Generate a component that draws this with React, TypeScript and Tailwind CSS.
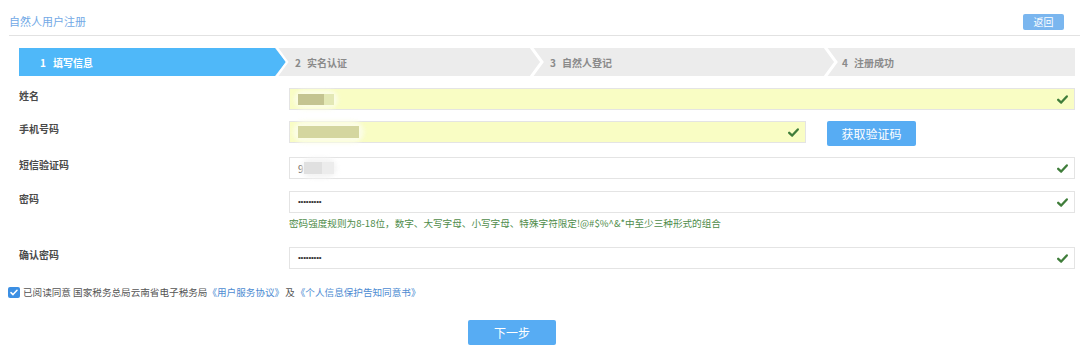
import React from "react";

const Check = () => (
  <svg width="11" height="9" viewBox="0 0 11 9" className="shrink-0">
    <path d="M1.2 4.8 L4.2 7.6 L9.8 1.4" fill="none" stroke="#3f7d3a" strokeWidth="2.3" strokeLinecap="round" strokeLinejoin="round" />
  </svg>
);

const Chevron = () => (
  <svg width="15" height="28" viewBox="0 0 15 28" className="shrink-0 bg-[#ececec]">
    <polyline points="1,-1 12,14 1,29" fill="none" stroke="#ffffff" strokeWidth="3" />
  </svg>
);

const BlueTip = () => (
  <svg width="15" height="28" viewBox="0 0 15 28" className="shrink-0 bg-[#ececec]">
    <polygon points="0,0 11,14 0,28" fill="#4fb8f9" />
    <polyline points="1,-1.5 12.2,14 1,29.5" fill="none" stroke="#ffffff" strokeWidth="2.2" />
  </svg>
);

const Label = ({ children }: { children: React.ReactNode }) => (
  <div className="w-[270px] shrink-0 pt-[1px] text-[10px] leading-[14px] font-semibold text-[#4a4a4a]">{children}</div>
);

const Input = ({ yellow, children, className }: { yellow?: boolean; children?: React.ReactNode; className?: string }) => (
  <div
    className={`h-[22px] border border-[#e4e4e4] flex items-center justify-between pl-[8px] pr-[6px] ${yellow ? "bg-[#f9fdc4]" : "bg-white"} ${className ?? "flex-1"}`}
  >
    <div className="flex items-center">{children}</div>
    <Check />
  </div>
);

const Dots = () => (
  <span className="font-['Liberation_Sans'] text-[8px] leading-none text-[#333] tracking-[-0.2px]">•••••••••</span>
);

export default function App() {
  return (
    <div className="w-[1080px] h-[350px] bg-white overflow-hidden font-['Noto_Sans_CJK_SC','Noto_Sans',sans-serif]">
      <div className="ml-[9px] h-[36px] flex items-center justify-between border-b border-[#e2e2e2] pr-[16px]">
        <div className="text-[11px] text-[#72a9e6] pt-[7px]">自然人用户注册</div>
        <div className="w-[41px] h-[16px] bg-[#7ab6ef] rounded-[2px] text-white text-[10px] flex items-center justify-center mt-[8px]">返回</div>
      </div>

      <div className="ml-[19px] mt-[12px] w-[1056px] h-[28px] flex bg-[#ececec] text-[10px] font-semibold">
        <div className="w-[256px] bg-[#4fb8f9] text-white flex items-center pl-[21px]">
          <span>1</span>
          <span className="ml-[7px]">填写信息</span>
        </div>
        <BlueTip />
        <div className="w-[240px] flex items-center pl-[5px] text-[#8a8a8a]">
          <span>2</span>
          <span className="ml-[6px]">实名认证</span>
        </div>
        <Chevron />
        <div className="w-[279px] flex items-center pl-[5px] text-[#8a8a8a]">
          <span>3</span>
          <span className="ml-[6px]">自然人登记</span>
        </div>
        <Chevron />
        <div className="flex-1 flex items-center pl-[3px] text-[#8a8a8a]">
          <span>4</span>
          <span className="ml-[6px]">注册成功</span>
        </div>
      </div>

      <div className="pl-[19px] w-[1075px] mt-[12px]">
        <div className="flex items-start">
          <Label>姓名</Label>
          <Input yellow>
            <div className="relative w-[36px] h-[11px]">
              <div className="absolute -inset-[4px] rounded-full bg-[#fbfde6] blur-[2px]" />
              <div className="absolute inset-0 flex">
                <div className="w-[26px] h-full bg-[#c4c491]" />
                <div className="w-[10px] h-full bg-[#e3e8b5]" />
              </div>
            </div>
          </Input>
        </div>

        <div className="flex items-start mt-[11px]">
          <Label>手机号码</Label>
          <Input yellow className="w-[517px]">
            <div className="relative w-[61px] h-[12px]">
              <div className="absolute -inset-[5px] rounded-full bg-[#fbfde6] blur-[2px]" />
              <div className="absolute inset-0 bg-[#d4d69f]" />
            </div>
          </Input>
          <div className="ml-[21px] w-[89px] h-[25px] bg-[#57acf3] rounded-[2px] text-white text-[12px] flex items-center justify-center">获取验证码</div>
        </div>

        <div className="flex items-start mt-[11px]">
          <Label>短信验证码</Label>
          <Input>
            <span className="text-[10px] text-[#555]">9</span>
            <div className="relative w-[30px] h-[12px]">
              <div className="absolute -inset-y-[4px] -inset-x-[3px] rounded-full bg-[#f4f4f4] blur-[2px]" />
              <div className="absolute inset-0 flex">
                <div className="w-[18px] h-full bg-[#e0e0e0]" />
                <div className="w-[12px] h-full bg-[#ececec]" />
              </div>
            </div>
          </Input>
        </div>

        <div className="flex items-start mt-[12px]">
          <Label>密码</Label>
          <div className="flex-1">
            <Input className="w-full">
              <Dots />
            </Input>
            <div className="mt-[4px] text-[9.6px] leading-[12px] text-[#4e8c4a] whitespace-nowrap">
              密码强度规则为8-18位，数字、大写字母、小写字母、特殊字符限定!@#$%^&amp;*中至少三种形式的组合
            </div>
          </div>
        </div>

        <div className="flex items-start mt-[18px]">
          <Label>确认密码</Label>
          <Input>
            <Dots />
          </Input>
        </div>
      </div>

      <div className="ml-[8px] mt-[17px] flex items-center text-[9.6px] leading-[12px] text-[#555]">
        <div className="w-[12px] h-[11px] rounded-[2px] bg-[#3c8fe3] flex items-center justify-center">
          <svg width="8" height="7" viewBox="0 0 8 7">
            <path d="M1 3.6 L3 5.6 L7 1.2" fill="none" stroke="#fff" strokeWidth="1.5" strokeLinecap="round" strokeLinejoin="round" />
          </svg>
        </div>
        <span className="ml-[3px]">已阅读同意 国家税务总局云南省电子税务局</span>
        <span className="text-[#4d8bd2]">《用户服务协议》</span>
        <span className="mx-[1px]">及</span>
        <span className="text-[#4d8bd2]">《个人信息保护告知同意书》</span>
      </div>

      <div className="mt-[22px] flex">
        <div className="ml-[468px] w-[88px] h-[25px] bg-[#57acf3] rounded-[2px] text-white text-[12px] flex items-center justify-center">下一步</div>
      </div>
    </div>
  );
}
